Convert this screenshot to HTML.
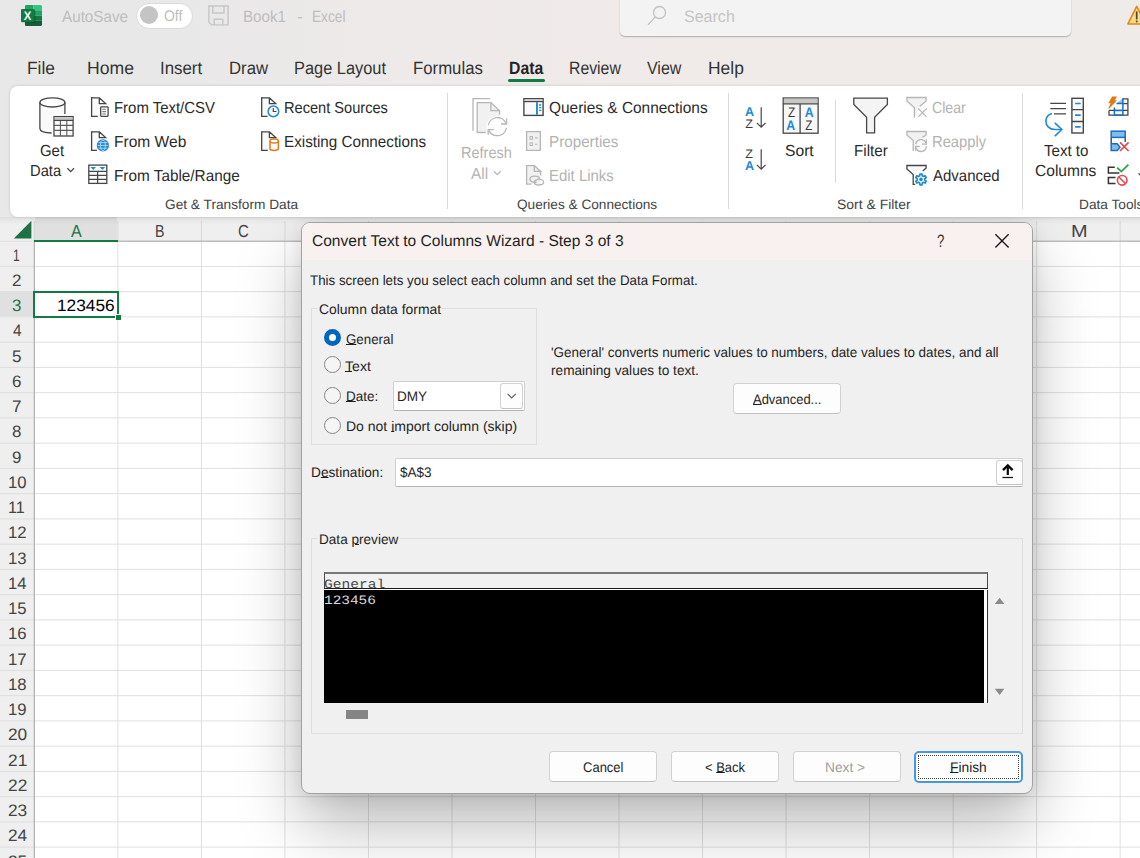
<!DOCTYPE html>
<html lang="en">
<head>
<meta charset="utf-8">
<title>Book1 - Excel</title>
<style>
*{box-sizing:border-box;margin:0;padding:0}
html,body{width:1140px;height:858px;overflow:hidden;background:#fff}
body{font-family:"Liberation Sans",sans-serif;color:#262626}
#app{position:relative;width:1140px;height:858px;overflow:hidden;background:#fff}
#app div,#app svg,#app span.t{position:absolute}
.t{white-space:nowrap;line-height:1;transform-origin:0 0;display:block;text-rendering:geometricPrecision}
.t u{text-decoration-thickness:1.2px;text-underline-offset:.4px}
/* window chrome */
#chrome{left:0;top:0;width:1140px;height:217px;background:linear-gradient(90deg,#e8e8e8 0,#e9e8e8 180px,#eeeae9 420px,#f0ebe9 700px,#efebe9 1140px)}
#search{left:620px;top:-6px;width:451px;height:42px;background:#f3f3f3;border-radius:5px;box-shadow:0 1px 1.5px rgba(0,0,0,.28)}
#toggle{left:135.5px;top:2.5px;width:57px;height:26px;border-radius:13px;background:#fff;border:1.5px solid #dadada}
#knob{left:3.5px;top:2px;width:18px;height:18px;border-radius:50%;background:#c4c4c4}
#tabline{left:508px;top:79px;width:36.7px;height:3px;border-radius:1.5px;background:#107c41}
#ribbon{left:10px;top:86px;width:1140px;height:131px;background:#fff;border-radius:8px 0 0 8px;box-shadow:0 0 3px rgba(0,0,0,.18)}
.vsep{width:1px;background:#dadada}
/* sheet */
#sheet{left:0;top:0;width:1140px;height:858px;background:#fff}
#colhdr{left:0;top:217px;width:1140px;height:24px;background:#efefef}
#rowhdr{left:0;top:241px;width:34px;height:617px;background:#efefef}
#hdrshade{left:0;top:217px;width:1140px;height:8px;background:linear-gradient(180deg,rgba(0,0,0,.07),rgba(0,0,0,.03) 40%,rgba(0,0,0,0))}
#colA{left:34.8px;top:217px;width:82.6px;height:23.7px;background:#e0e0e0}
#colAline{left:34.3px;top:239.8px;width:84.1px;height:2px;background:#107c41}
#row3{left:0;top:292.15px;width:33.8px;height:24.25px;background:#e0e0e0}
#sel{left:33.2px;top:290.7px;width:85.7px;height:27.1px;border:2px solid #107c41}
#handle{left:115.2px;top:313.6px;width:6px;height:6px;background:#107c41;border:1px solid #fff;border-width:1px 0 0 1px}
/* dialog */
#dlg{left:301px;top:222px;width:732px;height:572px;background:#f0f0f0;border:1px solid #a2a2a2;border-radius:9px;box-shadow:0 32px 64px rgba(0,0,0,.27),0 2px 18px rgba(0,0,0,.09);overflow:hidden}
#dlgtitle{left:302px;top:223px;width:730px;height:37px;background:#f9f1ef;border-radius:8px 8px 0 0}
.grp{border:1px solid #dedede}
.grplbl{background:#f0f0f0;height:14px}
.radio{width:17px;height:17px;border-radius:50%;border:1.4px solid #868686;background:#f5f5f5}
.radio.on{border:5px solid #0067c0;background:#fff}
.btn{background:#fdfdfd;border:1px solid #d2d2d2;border-bottom-color:#c2c2c2;border-radius:4px}
.inp{background:#fff;border:1px solid #cfcfcf;border-bottom-color:#b4b4b4;border-radius:2px}
#finish{border:2px solid #4597df;border-radius:5px;background:#fdfdfd}
#focus{left:2px;top:2px;width:101px;height:24px;border:1px dotted #444}

</style>
</head>
<body>
<div id="app">
<div id="sheet">
<div id="colhdr"></div><div id="rowhdr"></div><div id="colA"></div><div id="row3"></div>
<svg id="grid" width="1140" height="858" viewBox="0 0 1140 858" style="left:0;top:0">
<g fill="#e0e0e0">
<rect x="117.40" y="242" width="1" height="616"/>
<rect x="200.92" y="242" width="1" height="616"/>
<rect x="284.44" y="242" width="1" height="616"/>
<rect x="367.96" y="242" width="1" height="616"/>
<rect x="451.48" y="242" width="1" height="616"/>
<rect x="535.00" y="242" width="1" height="616"/>
<rect x="618.52" y="242" width="1" height="616"/>
<rect x="702.04" y="242" width="1" height="616"/>
<rect x="785.56" y="242" width="1" height="616"/>
<rect x="869.08" y="242" width="1" height="616"/>
<rect x="952.60" y="242" width="1" height="616"/>
<rect x="1036.12" y="242" width="1" height="616"/>
<rect x="1119.64" y="242" width="1" height="616"/>
<rect x="35" y="265.90" width="1105" height="1"/>
<rect x="35" y="291.15" width="1105" height="1"/>
<rect x="35" y="316.40" width="1105" height="1"/>
<rect x="35" y="341.65" width="1105" height="1"/>
<rect x="35" y="366.90" width="1105" height="1"/>
<rect x="35" y="392.15" width="1105" height="1"/>
<rect x="35" y="417.40" width="1105" height="1"/>
<rect x="35" y="442.65" width="1105" height="1"/>
<rect x="35" y="467.90" width="1105" height="1"/>
<rect x="35" y="493.15" width="1105" height="1"/>
<rect x="35" y="518.40" width="1105" height="1"/>
<rect x="35" y="543.65" width="1105" height="1"/>
<rect x="35" y="568.90" width="1105" height="1"/>
<rect x="35" y="594.15" width="1105" height="1"/>
<rect x="35" y="619.40" width="1105" height="1"/>
<rect x="35" y="644.65" width="1105" height="1"/>
<rect x="35" y="669.90" width="1105" height="1"/>
<rect x="35" y="695.15" width="1105" height="1"/>
<rect x="35" y="720.40" width="1105" height="1"/>
<rect x="35" y="745.65" width="1105" height="1"/>
<rect x="35" y="770.90" width="1105" height="1"/>
<rect x="35" y="796.15" width="1105" height="1"/>
<rect x="35" y="821.40" width="1105" height="1"/>
<rect x="35" y="846.65" width="1105" height="1"/>
<rect x="35" y="871.90" width="1105" height="1"/>
</g><g fill="#d9d9d9">
<rect x="117.40" y="221" width="1" height="20"/>
<rect x="200.92" y="221" width="1" height="20"/>
<rect x="284.44" y="221" width="1" height="20"/>
<rect x="367.96" y="221" width="1" height="20"/>
<rect x="451.48" y="221" width="1" height="20"/>
<rect x="535.00" y="221" width="1" height="20"/>
<rect x="618.52" y="221" width="1" height="20"/>
<rect x="702.04" y="221" width="1" height="20"/>
<rect x="785.56" y="221" width="1" height="20"/>
<rect x="869.08" y="221" width="1" height="20"/>
<rect x="952.60" y="221" width="1" height="20"/>
<rect x="1036.12" y="221" width="1" height="20"/>
<rect x="1119.64" y="221" width="1" height="20"/>
</g><g fill="#dedede">
<rect x="0" y="265.90" width="34" height="1"/>
<rect x="0" y="291.15" width="34" height="1"/>
<rect x="0" y="316.40" width="34" height="1"/>
<rect x="0" y="341.65" width="34" height="1"/>
<rect x="0" y="366.90" width="34" height="1"/>
<rect x="0" y="392.15" width="34" height="1"/>
<rect x="0" y="417.40" width="34" height="1"/>
<rect x="0" y="442.65" width="34" height="1"/>
<rect x="0" y="467.90" width="34" height="1"/>
<rect x="0" y="493.15" width="34" height="1"/>
<rect x="0" y="518.40" width="34" height="1"/>
<rect x="0" y="543.65" width="34" height="1"/>
<rect x="0" y="568.90" width="34" height="1"/>
<rect x="0" y="594.15" width="34" height="1"/>
<rect x="0" y="619.40" width="34" height="1"/>
<rect x="0" y="644.65" width="34" height="1"/>
<rect x="0" y="669.90" width="34" height="1"/>
<rect x="0" y="695.15" width="34" height="1"/>
<rect x="0" y="720.40" width="34" height="1"/>
<rect x="0" y="745.65" width="34" height="1"/>
<rect x="0" y="770.90" width="34" height="1"/>
<rect x="0" y="796.15" width="34" height="1"/>
<rect x="0" y="821.40" width="34" height="1"/>
<rect x="0" y="846.65" width="34" height="1"/>
<rect x="0" y="871.90" width="34" height="1"/>
</g>
<rect x="0" y="240.7" width="34" height="1" fill="#dedede"/>
<rect x="34" y="240.7" width="1106" height="1" fill="#a0a0a0"/>
<rect x="33.8" y="221" width="1" height="20" fill="#cfcfcf"/>
<rect x="33.8" y="241" width="1" height="617" fill="#a0a0a0"/>
<path d="M13.8 238.4 L31.4 238.4 L31.4 220.8 Z" fill="#1e7145"/>
</svg>
<div id="colAline"></div><div id="sel"></div><div id="handle"></div><div id="hdrshade"></div>
</div>
<div id="dlg"></div>
<div id="chrome">
<div id="search"></div>
<div id="toggle"><div id="knob"></div></div>
<div id="tabline"></div>
<div id="ribbon"></div>
<div class="vsep" style="left:447px;top:93px;height:116px"></div>
<div class="vsep" style="left:728px;top:93px;height:116px"></div>
<div class="vsep" style="left:835px;top:100px;height:83px"></div>
<div class="vsep" style="left:1022px;top:93px;height:116px"></div>
</div>
<div id="dlgtitle"></div>
<div id="dlgbody">
<div class="grp" style="left:311px;top:308px;width:226px;height:137px"></div>
<div class="grplbl" style="left:317px;top:302px;width:125px"></div>
<div class="radio on" style="left:324px;top:329px"></div>
<div class="radio" style="left:324px;top:356px"></div>
<div class="radio" style="left:324px;top:387px"></div>
<div class="radio" style="left:324px;top:417px"></div>
<div class="inp" style="left:393px;top:381px;width:132px;height:30px"></div>
<div class="btn" style="left:500px;top:383px;width:23px;height:26px;border-radius:3px"></div>
<div class="btn" style="left:733px;top:383px;width:108px;height:31px"></div>
<div class="inp" style="left:395px;top:458px;width:628px;height:29px"></div>
<div class="btn" style="left:996px;top:460px;width:27px;height:25px;border-radius:3px"></div>
<div class="grp" style="left:311px;top:538px;width:712px;height:196px"></div>
<div class="grplbl" style="left:317px;top:532px;width:83px"></div>
<div id="pvhead" style="left:324px;top:572px;width:664px;height:16px;background:#f1f1f1;border:1px solid #4a4a4a;border-top:2px solid #777;border-bottom:0"></div>
<div id="pvline" style="left:324px;top:588px;width:664px;height:1px;background:#1a1a1a"></div>
<div id="pvgap" style="left:325px;top:589px;width:659px;height:1px;background:#fff"></div>
<div id="pvblack" style="left:324px;top:590px;width:660px;height:113px;background:#000"></div>
<div id="pvstrip" style="left:984px;top:590px;width:4px;height:113px;background:#fff;border-right:1px solid #333"></div>
<div id="hthumb" style="left:345.6px;top:710.1px;width:22.3px;height:9.4px;background:#858585"></div>
<div class="btn" style="left:549px;top:751px;width:108px;height:31px"></div>
<div class="btn" style="left:671px;top:751px;width:108px;height:31px"></div>
<div class="btn" style="left:793px;top:751px;width:108px;height:31px"></div>
<div id="finish" style="left:914px;top:751px;width:109px;height:32px"><div id="focus"></div></div>
</div>
<svg id="icons" width="1140" height="858" viewBox="0 0 1140 858" style="left:0;top:0" fill="none" stroke-linecap="butt" stroke-linejoin="miter">
<g id="ic-excel" stroke="none">
<clipPath id="xlclip"><rect x="24.8" y="5" width="17.2" height="21" rx="1.6"/></clipPath>
<g clip-path="url(#xlclip)">
<rect x="24.8" y="5" width="8.6" height="5.3" fill="#21a366"/><rect x="33.4" y="5" width="8.6" height="5.3" fill="#33c481"/>
<rect x="24.8" y="10.3" width="8.6" height="5.3" fill="#107c41"/><rect x="33.4" y="10.3" width="8.6" height="5.3" fill="#21a366"/>
<rect x="24.8" y="15.6" width="8.6" height="5.2" fill="#185c37"/><rect x="33.4" y="15.6" width="8.6" height="5.2" fill="#107c41"/>
<rect x="24.8" y="20.8" width="17.2" height="5.2" fill="#185c37"/>
<rect x="25" y="9.6" width="10.4" height="13.4" rx="1.2" fill="#000" opacity=".28"/>
</g>
<rect x="21" y="9" width="13.4" height="13.2" rx="1.3" fill="#107c41"/>
<text x="27.6" y="20" font-family="'Liberation Sans',sans-serif" font-size="12.4" font-weight="700" fill="#fff" text-anchor="middle" textLength="7.6" lengthAdjust="spacingAndGlyphs" text-rendering="geometricPrecision">X</text>
</g>
<g id="ic-save" stroke="#c6c6c6" stroke-width="1.4">
<path d="M208.9 6H228.1V24.9H211.6L208.9 22.2Z"/><path d="M212.8 6V13H224V6"/><path d="M214.2 24.9V19.3H222.8V24.9"/>
</g>
<g id="ic-search" stroke="#c2c2c2" stroke-width="1.3" stroke-linecap="round"><circle cx="659.5" cy="12.5" r="6"/><path d="M655.2 16.9L648.4 24.4"/></g>
<g id="ic-warn"><path d="M1136.7 6.4L1146 23.9H1127.9Z" fill="#f9dc8c" stroke="#e8820f" stroke-width="1.5" stroke-linejoin="round"/><rect x="1135.85" y="11.4" width="1.7" height="8" fill="#4a4a3c" stroke="none"/><rect x="1135.85" y="20.5" width="1.7" height="1.8" fill="#4a4a3c" stroke="none"/></g>
<g id="ic-getdata" stroke="#464646" stroke-width="1.3">
<path d="M39.9 102.3V128.6C39.9 131 45 133 51.6 133.2V113.9H64.9V102.3Z" fill="#fafafa" stroke="none"/>
<ellipse cx="52.4" cy="102.4" rx="12.5" ry="4.6" fill="#fdfdfd"/>
<path d="M39.9 102.4V128.4C39.9 130.8 44.6 132.7 51.6 133"/><path d="M64.9 102.4V114"/>
<rect x="54" y="116.6" width="19.1" height="19.4" fill="#fff"/><rect x="54.6" y="117.2" width="17.9" height="2.6" fill="#c8c6c4" stroke="none"/>
<path d="M54 120.4H73.1"/><path d="M54 125.4H73.1M54 130.4H73.1M60.4 120.4V136M66.8 120.4V136" stroke-width="1.1" stroke="#5a5a5a"/>
</g>
<g id="ic-textcsv"><path d="M91.6 97.8V116.4H105.6V103.6L99.3 97.8Z" fill="#fafafa" stroke="none"/><path d="M91.6 97.8H99.3V103.6H105.6L99.3 97.8" stroke="#464646" stroke-width="1.3"/><path d="M91.6 97.1V116.4H97.8" stroke="#464646" stroke-width="1.3"/>
<rect x="100.7" y="106.8" width="7.4" height="9.6" rx=".8" fill="#fff" stroke="#464646" stroke-width="1.3"/><path d="M102.3 109.2H105.9M102.3 111.6H105.9M102.3 114H105.9" stroke="#777" stroke-width="1.1"/></g>
<g id="ic-web"><path d="M91.6 131.8V150.4H105.6V137.6L99.3 131.8Z" fill="#fafafa" stroke="none"/><path d="M91.6 131.8H99.3V137.6H105.6L99.3 131.8" stroke="#464646" stroke-width="1.3"/><path d="M91.6 131.2V150.4H96.9" stroke="#464646" stroke-width="1.3"/>
<circle cx="102.9" cy="145.4" r="6.1" fill="#1e8ad6"/>
<g stroke="#bfe0f6" stroke-width=".9" opacity=".95"><ellipse cx="102.9" cy="145.4" rx="2.4" ry="5.2"/><path d="M97.6 145.4H108.2M98.6 142.6H107.2M98.6 148.2H107.2"/></g></g>
<g id="ic-table" stroke="#464646" stroke-width="1.3"><rect x="88.8" y="165.1" width="18" height="18.3" fill="#fff"/>
<path d="M88.8 171.4H106.8M88.8 175.4H106.8M88.8 179.4H106.8M97.6 171.4V183.4"/>
<path d="M90.4 167.1H96L93.2 169.9ZM99.6 167.1H105.2L102.4 169.9Z" fill="#1e8ad6" stroke="none"/></g>
<g id="ic-recent"><path d="M261.7 97.8V116.4H275.7V103.6L269.4 97.8Z" fill="#fafafa" stroke="none"/><path d="M261.7 97.8H269.4V103.6H275.7L269.4 97.8" stroke="#464646" stroke-width="1.3"/><path d="M261.7 97.1V116.4H267.6" stroke="#464646" stroke-width="1.3"/>
<circle cx="273.4" cy="111.4" r="5.3" fill="#fff" stroke="#1e8ad6" stroke-width="1.5"/><path d="M273.3 108V111.5H276.4" stroke="#464646" stroke-width="1.2"/></g>
<g id="ic-existing"><path d="M261.7 131.8V150.4H275.7V137.6L269.4 131.8Z" fill="#fafafa" stroke="none"/><path d="M261.7 131.8H269.4V137.6H275.7L269.4 131.8" stroke="#464646" stroke-width="1.3"/><path d="M261.7 131.2V150.4H267.8" stroke="#464646" stroke-width="1.3"/>
<g stroke="#e07a18" stroke-width="1.5"><path d="M270 140.9V148.6C270 149.8 271.9 150.5 274.2 150.5S278.4 149.8 278.4 148.6V140.9" fill="#fafafa"/><ellipse cx="274.2" cy="140.9" rx="4.2" ry="2" fill="#fff"/></g></g>
<g id="ic-refresh" stroke="#b6b6b6" stroke-width="1.3">
<path d="M473 130.8V98.6H490.2"/>
<path d="M477.2 102.6H490.9L499.6 110.9V133.1H477.2Z" fill="#f1f1f1" stroke="none"/>
<path d="M485.6 132.5H477.2V102.6H490.9L499.6 110.9V114.6"/><path d="M490.9 102.6V110.7H499.6"/>
<circle cx="497.3" cy="126.7" r="10.8" fill="#fff" stroke="none"/>
<path d="M488.3 125.4A9.2 9.2 0 0 1 505.9 123.2"/><path d="M506.6 118.5V124H501"/>
<path d="M506.3 128A9.2 9.2 0 0 1 488.9 130.4"/><path d="M488.2 134.8V129.6H493.8"/>
</g>
<g id="ic-qc"><rect x="523.9" y="98.7" width="19.2" height="16.7" fill="#fafafa" stroke="#464646" stroke-width="1.4"/>
<rect x="524.6" y="99.4" width="17.8" height="1.7" fill="#d2d2d2"/><path d="M523.9 101.6H543.1" stroke="#464646" stroke-width="1.2"/>
<rect x="536" y="102.2" width="1.9" height="12.6" fill="#1e8ad6"/><path d="M539 105H541.2M539 107.6H541.2M539 110.3H541.2" stroke="#1e8ad6" stroke-width="1.3"/></g>
<g id="ic-props" stroke="#b6b6b6"><rect x="526.6" y="131.6" width="13.7" height="18.8" fill="#f1f1f1" stroke-width="1.3"/>
<rect x="530" y="136.6" width="2.6" height="2.6" stroke-width="1"/><rect x="530" y="142.9" width="2.6" height="2.6" stroke-width="1"/><path d="M535 137.9H537.5M535 144.2H537.5" stroke-width="1.1"/></g>
<g id="ic-links"><path d="M526.6 165.6V184.2H540.6V171.4L534.3 165.6Z" fill="#f1f1f1" stroke="none"/><path d="M526.6 165.6H534.3V171.4H540.6L534.3 165.6" stroke="#b6b6b6" stroke-width="1.3"/><path d="M526.6 164.9V184.2H531.3" stroke="#b6b6b6" stroke-width="1.3"/><path d="M540.6 170.8V175.4" stroke="#b6b6b6" stroke-width="1.3"/>
<g stroke="#b6b6b6" stroke-width="1.3"><path d="M536.6 182.2C532.6 182.6 529.9 181.2 529.9 179.2C529.9 177.3 532 176.2 534.8 176.2C537.6 176.2 539.4 177.4 539.4 178.7" fill="none"/><path d="M537 179.3C540.6 178.8 543.6 180 543.6 182.1C543.6 184 541.6 185 539 185C536.2 185 534.4 183.8 534.4 182.4C534.4 181 535.6 180.2 537.2 180"/></g></g>
<g id="ic-sorts" font-family="'Liberation Sans',sans-serif" stroke="none" text-rendering="geometricPrecision">
<text x="745.1" y="116.0" font-size="12.8" font-weight="700" fill="#1e8ad6" textLength="9.1" lengthAdjust="spacingAndGlyphs">A</text>
<text x="745.3" y="128.0" font-size="12.2" font-weight="400" fill="#3a3a3a" textLength="7.7" lengthAdjust="spacingAndGlyphs">Z</text>
<text x="745.3" y="158.0" font-size="12.2" font-weight="400" fill="#3a3a3a" textLength="7.7" lengthAdjust="spacingAndGlyphs">Z</text>
<text x="745.1" y="170.0" font-size="12.8" font-weight="700" fill="#1e8ad6" textLength="9.1" lengthAdjust="spacingAndGlyphs">A</text>
<g stroke="#464646" stroke-width="1.2" fill="none"><path d="M761.2 107.2V127M756.9 122.9L761.2 127.2L765.5 122.9"/><path d="M761.2 149.2V169M756.9 164.9L761.2 169.2L765.5 164.9"/></g>
<rect x="783.2" y="98" width="34.9" height="35.2" fill="#f8f8f8" stroke="#464646" stroke-width="1.3"/><rect x="783.9" y="98.7" width="33.5" height="4.6" fill="#c8c6c4"/>
<path d="M783.2 103.8H818.1M800.1 103.8V133.2" stroke="#464646" stroke-width="1.3" fill="none"/>
<text x="787.9" y="116.5" font-size="13.8" font-weight="400" fill="#3a3a3a" textLength="7.2" lengthAdjust="spacingAndGlyphs">Z</text>
<text x="786.3" y="129.8" font-size="13.8" font-weight="700" fill="#1e8ad6" textLength="8.9" lengthAdjust="spacingAndGlyphs">A</text>
<text x="804.7" y="116.5" font-size="13.8" font-weight="700" fill="#1e8ad6" textLength="8.9" lengthAdjust="spacingAndGlyphs">A</text>
<text x="805.2" y="129.8" font-size="13.8" font-weight="400" fill="#3a3a3a" textLength="7.1" lengthAdjust="spacingAndGlyphs">Z</text>
</g>
<g id="ic-filter"><path d="M853.8 98.2H887.4V104.4L874.6 117.2V132.8H866.6V117.2L853.8 104.4Z" fill="#f4f4f4" stroke="#464646" stroke-width="1.3"/></g>
<g id="ic-clear" stroke="#b6b6b6" stroke-width="1.3"><path d="M914.4 117.4V107.7L906.9 101V97.5H926.1V101L919.7 106.5" fill="#f2f2f2"/><path d="M918.2 108.5L926.6 116.9M926.6 108.5L918.2 116.9" stroke-width="1.1"/></g>
<g id="ic-reapply" stroke="#b6b6b6" stroke-width="1.3"><path d="M913.2 151V140.6L906.9 135V131.5H926.1V135L922.4 137.4" fill="#f2f2f2"/>
<path d="M915.9 144.2A5.2 5.2 0 0 1 925.9 143"/><path d="M926.4 139.6V144.2H922"/><path d="M926.3 146.2A5.2 5.2 0 0 1 916.2 148"/><path d="M915.6 150.8V146.5H919.8"/></g>
<g id="ic-adv"><path d="M915.2 184.4H913.2V174.5L906.9 169V165.5H926.1V168L922.8 170.9" fill="#fafafa" stroke="#464646" stroke-width="1.3"/>
<circle cx="921" cy="179.4" r="6.4" fill="#fff" stroke="none"/>
<path d="M919.73 175.82L919.91 174.01L922.09 174.01L922.27 175.82L923.47 176.51L925.12 175.76L926.21 177.65L924.74 178.71L924.74 180.09L926.21 181.15L925.12 183.04L923.47 182.29L922.27 182.98L922.09 184.79L919.91 184.79L919.73 182.98L918.53 182.29L916.88 183.04L915.79 181.15L917.26 180.09L917.26 178.71L915.79 177.65L916.88 175.76L918.53 176.51Z" fill="#fff" stroke="#1e8ad6" stroke-width="1.7" stroke-linejoin="round"/>
<circle cx="921" cy="179.4" r="1.8" fill="#1e8ad6" stroke="none"/></g>
<g id="ic-t2c"><path d="M1050.3 103.4H1066M1050.3 108.6H1066M1054 113.8H1066" stroke="#464646" stroke-width="1.3"/>
<rect x="1071.9" y="98.3" width="11.4" height="34.7" fill="#fafafa" stroke="#464646" stroke-width="1.4"/><path d="M1071.9 109.6H1083.3M1071.9 121.5H1083.3" stroke="#464646" stroke-width="1.4"/>
<path d="M1075.1 103.5H1080.7M1075.1 115.1H1080.7M1075.1 126.9H1080.7" stroke="#1e8ad6" stroke-width="1.7"/>
<path d="M1052 113.6C1048.2 114.6 1045.9 117.6 1045.9 121.2C1045.9 126 1049.6 129.5 1054.6 129.5H1061.6" stroke="#1e8ad6" stroke-width="1.6"/><path d="M1054.8 122.9L1061.8 129.5L1054.8 136.2" stroke="#1e8ad6" stroke-width="1.6"/></g>
<g id="ic-flash"><path d="M1122.9 98.9H1127.9V115.2H1109V110.4" stroke="#464646" stroke-width="1.3"/><path d="M1109 110.4H1127.9M1122.9 103.6H1127.9" stroke="#464646" stroke-width="1.3"/>
<path d="M1122.9 98.3L1116.4 103.6H1122.9Z" fill="#8cc4ee" stroke="none"/>
<path d="M1114.4 107.4V115.2H1122.9V98.3M1116.6 103.6H1122.9M1114.4 110.4H1122.9" stroke="#1a6fc4" stroke-width="1.5"/>
<path d="M1112.2 96.4H1117L1114.8 100.2H1117L1109.4 108.4H1108.2L1110.8 103.2H1108.2Z" fill="#e07a10" stroke="none"/></g>
<g id="ic-dups"><rect x="1111.2" y="131.2" width="14" height="6.2" fill="#83bdec" stroke="#1a6fc4" stroke-width="1.5"/>
<path d="M1111.2 138V143.4M1125.2 138V142" stroke="#464646" stroke-width="1.4"/>
<path d="M1111.2 143.8H1117.2L1120 147.2L1117.2 150.4H1111.2Z" fill="#83bdec" stroke="#1a6fc4" stroke-width="1.5"/>
<path d="M1120 142.4L1128.6 151M1128.6 142.4L1120 151" stroke="#e8474c" stroke-width="1.7"/></g>
<g id="ic-valid"><path d="M1114.8 167.3H1108.4V173.1H1119.4M1115.5 177.6H1108.4V183.6H1115.5" stroke="#333" stroke-width="1.5"/>
<path d="M1117.2 167.6L1121.3 171.6L1128.4 164.7" stroke="#2ea050" stroke-width="1.8"/>
<circle cx="1122.2" cy="180.3" r="4.8" fill="#fff" stroke="#e8474c" stroke-width="1.6"/><path d="M1118.9 177L1125.5 183.6" stroke="#e8474c" stroke-width="1.5"/>
<path d="M1138.6 173.4L1141.8 176.6" stroke="#464646" stroke-width="1.3"/></g>
<g id="ic-chev" stroke-width="1.3"><path d="M67.4 168.3L70.7 171.6L74 168.3" stroke="#464646"/><path d="M493.9 171.2L497.3 174.6L500.7 171.2" stroke="#b6b6b6"/></g>
<g id="ic-dlg"><path d="M995.4 234.2L1008.6 247.4M1008.6 234.2L995.4 247.4" stroke="#1b1b1b" stroke-width="1.35"/>
<path d="M507.6 393.8L511.7 397.9L515.8 393.8" stroke="#5a5a5a" stroke-width="1.1"/>
<path d="M1007.8 466V475" stroke="#0a0a0a" stroke-width="2.2"/><path d="M1003 470.2L1007.8 465.4L1012.6 470.2" stroke="#0a0a0a" stroke-width="2.4" stroke-linejoin="miter"/><path d="M1002.4 477.5H1013" stroke="#1a1a1a" stroke-width="1.3"/>
<path d="M994.8 604L999.6 597.8L1004.4 604Z" fill="#8a8a8a" stroke="none"/><path d="M994.8 688.8L999.6 695L1004.4 688.8Z" fill="#8a8a8a" stroke="none"/></g>
</svg>
<div id="labels">
<span class="t" style="left:62.04px;top:9px;font-size:16.3px;color:#bdbdbd;transform:scaleX(0.9356)">AutoSave</span>
<span class="t" style="left:164.32px;top:9px;font-size:15.4px;color:#bdbdbd;transform:scaleX(0.9084)">Off</span>
<span class="t" style="left:243.48px;top:9px;font-size:16.3px;color:#bdbdbd;transform:scaleX(0.9308)">Book1</span>
<span class="t" style="left:296.73px;top:9px;font-size:16.3px;color:#bdbdbd;transform:scaleX(1.0422)">-</span>
<span class="t" style="left:311.57px;top:9px;font-size:16.3px;color:#bdbdbd;transform:scaleX(0.8401)">Excel</span>
<span class="t" style="left:683.55px;top:9px;font-size:16.6px;color:#c4c4c4;transform:scaleX(0.9662)">Search</span>
<span class="t" style="left:27.03px;top:60px;font-size:17.8px;color:#333333;transform:scaleX(0.9748)">File</span>
<span class="t" style="left:87.42px;top:60px;font-size:17.8px;color:#333333;transform:scaleX(0.9907)">Home</span>
<span class="t" style="left:159.83px;top:60px;font-size:17.8px;color:#333333;transform:scaleX(0.9483)">Insert</span>
<span class="t" style="left:228.87px;top:60px;font-size:17.8px;color:#333333;transform:scaleX(0.9411)">Draw</span>
<span class="t" style="left:293.79px;top:60px;font-size:17.8px;color:#333333;transform:scaleX(0.9215)">Page Layout</span>
<span class="t" style="left:413.07px;top:60px;font-size:17.8px;color:#333333;transform:scaleX(0.9423)">Formulas</span>
<span class="t" style="left:568.62px;top:60px;font-size:17.8px;color:#333333;transform:scaleX(0.8890)">Review</span>
<span class="t" style="left:647.41px;top:60px;font-size:17.8px;color:#333333;transform:scaleX(0.8991)">View</span>
<span class="t" style="left:707.83px;top:60px;font-size:17.8px;color:#333333;transform:scaleX(0.9795)">Help</span>
<span class="t" style="left:508.75px;top:60px;font-size:17.8px;color:#242424;font-weight:700;transform:scaleX(0.8870)">Data</span>
<span class="t" style="left:40.26px;top:144px;font-size:16px;color:#2b2b2b;transform:scaleX(0.9315)">Get</span>
<span class="t" style="left:29.59px;top:164px;font-size:16px;color:#2b2b2b;transform:scaleX(0.9206)">Data</span>
<span class="t" style="left:113.58px;top:101px;font-size:16px;color:#2b2b2b;transform:scaleX(0.9332)">From Text/CSV</span>
<span class="t" style="left:113.54px;top:135px;font-size:16px;color:#2b2b2b;transform:scaleX(0.9717)">From Web</span>
<span class="t" style="left:113.56px;top:169px;font-size:16px;color:#2b2b2b;transform:scaleX(0.9574)">From Table/Range</span>
<span class="t" style="left:284.10px;top:101px;font-size:16px;color:#2b2b2b;transform:scaleX(0.9128)">Recent Sources</span>
<span class="t" style="left:284.06px;top:135px;font-size:16px;color:#2b2b2b;transform:scaleX(0.9505)">Existing Connections</span>
<span class="t" style="left:164.78px;top:198px;font-size:13.6px;color:#444;transform:scaleX(1.0069)">Get &amp; Transform Data</span>
<span class="t" style="left:461.11px;top:146px;font-size:16px;color:#b3b3b3;transform:scaleX(0.9085)">Refresh</span>
<span class="t" style="left:471.04px;top:167px;font-size:16px;color:#b3b3b3;transform:scaleX(0.9587)">All</span>
<span class="t" style="left:548.76px;top:101px;font-size:16px;color:#2b2b2b;transform:scaleX(0.9642)">Queries &amp; Connections</span>
<span class="t" style="left:548.56px;top:135px;font-size:16px;color:#b3b3b3;transform:scaleX(0.9511)">Properties</span>
<span class="t" style="left:548.58px;top:169px;font-size:16px;color:#b3b3b3;transform:scaleX(0.9332)">Edit Links</span>
<span class="t" style="left:517.32px;top:198px;font-size:13.6px;color:#444;transform:scaleX(1.0025)">Queries &amp; Connections</span>
<span class="t" style="left:785.16px;top:144px;font-size:16px;color:#2b2b2b;transform:scaleX(0.9779)">Sort</span>
<span class="t" style="left:854.07px;top:144px;font-size:16px;color:#2b2b2b;transform:scaleX(0.9473)">Filter</span>
<span class="t" style="left:931.80px;top:101px;font-size:16px;color:#b3b3b3;transform:scaleX(0.8829)">Clear</span>
<span class="t" style="left:931.59px;top:135px;font-size:16px;color:#b3b3b3;transform:scaleX(0.9220)">Reapply</span>
<span class="t" style="left:933.04px;top:169px;font-size:16px;color:#2b2b2b;transform:scaleX(0.9362)">Advanced</span>
<span class="t" style="left:837.12px;top:198px;font-size:13.6px;color:#444;transform:scaleX(1.0260)">Sort &amp; Filter</span>
<span class="t" style="left:1043.71px;top:144px;font-size:16px;color:#2b2b2b;transform:scaleX(0.9422)">Text to</span>
<span class="t" style="left:1034.73px;top:164px;font-size:16px;color:#2b2b2b;transform:scaleX(0.9721)">Columns</span>
<span class="t" style="left:1079.06px;top:198px;font-size:13.6px;color:#444;transform:scaleX(1.0067)">Data Tools</span>
<span class="t" style="left:70.54px;top:223px;font-size:17.4px;color:#1e7145;transform:scaleX(0.9214)">A</span>
<span class="t" style="left:155.19px;top:223px;font-size:17.4px;color:#444444;transform:scaleX(0.8171)">B</span>
<span class="t" style="left:237.87px;top:223px;font-size:17.4px;color:#444444;transform:scaleX(0.8589)">C</span>
<span class="t" style="left:1070.86px;top:223px;font-size:17.4px;color:#444444;transform:scaleX(1.1453)">M</span>
<span class="t" style="left:12.90px;top:248px;font-size:16.6px;color:#444444;transform:scaleX(0.7211)">1</span>
<span class="t" style="left:11.99px;top:273px;font-size:16.6px;color:#444444;transform:scaleX(1.0224)">2</span>
<span class="t" style="left:12.02px;top:298px;font-size:16.6px;color:#1e7145;transform:scaleX(1.0195)">3</span>
<span class="t" style="left:12.81px;top:323px;font-size:16.6px;color:#444444;transform:scaleX(0.9293)">4</span>
<span class="t" style="left:11.91px;top:349px;font-size:16.6px;color:#444444;transform:scaleX(1.0313)">5</span>
<span class="t" style="left:11.97px;top:374px;font-size:16.6px;color:#444444;transform:scaleX(1.0244)">6</span>
<span class="t" style="left:11.92px;top:399px;font-size:16.6px;color:#444444;transform:scaleX(1.0303)">7</span>
<span class="t" style="left:12.02px;top:424px;font-size:16.6px;color:#444444;transform:scaleX(1.0190)">8</span>
<span class="t" style="left:12.02px;top:450px;font-size:16.6px;color:#444444;transform:scaleX(1.0195)">9</span>
<span class="t" style="left:8.23px;top:475px;font-size:16.6px;color:#444444;transform:scaleX(1.0053)">10</span>
<span class="t" style="left:8.26px;top:500px;font-size:16.6px;color:#444444;transform:scaleX(0.9724)">11</span>
<span class="t" style="left:8.23px;top:525px;font-size:16.6px;color:#444444;transform:scaleX(1.0080)">12</span>
<span class="t" style="left:8.23px;top:551px;font-size:16.6px;color:#444444;transform:scaleX(1.0064)">13</span>
<span class="t" style="left:8.23px;top:576px;font-size:16.6px;color:#444444;transform:scaleX(1.0021)">14</span>
<span class="t" style="left:8.23px;top:601px;font-size:16.6px;color:#444444;transform:scaleX(1.0057)">15</span>
<span class="t" style="left:8.23px;top:626px;font-size:16.6px;color:#444444;transform:scaleX(1.0064)">16</span>
<span class="t" style="left:8.23px;top:652px;font-size:16.6px;color:#444444;transform:scaleX(1.0080)">17</span>
<span class="t" style="left:8.23px;top:677px;font-size:16.6px;color:#444444;transform:scaleX(1.0064)">18</span>
<span class="t" style="left:8.23px;top:702px;font-size:16.6px;color:#444444;transform:scaleX(1.0073)">19</span>
<span class="t" style="left:7.57px;top:727px;font-size:16.6px;color:#444444;transform:scaleX(1.0415)">20</span>
<span class="t" style="left:7.57px;top:753px;font-size:16.6px;color:#444444;transform:scaleX(1.0437)">21</span>
<span class="t" style="left:7.57px;top:778px;font-size:16.6px;color:#444444;transform:scaleX(1.0444)">22</span>
<span class="t" style="left:7.57px;top:803px;font-size:16.6px;color:#444444;transform:scaleX(1.0427)">23</span>
<span class="t" style="left:7.58px;top:828px;font-size:16.6px;color:#444444;transform:scaleX(1.0382)">24</span>
<span class="t" style="left:7.57px;top:854px;font-size:16.6px;color:#444444;transform:scaleX(1.0420)">25</span>
<span class="t" style="left:57.18px;top:298px;font-size:16.4px;color:#000;transform:scaleX(1.0536)">123456</span>
<span class="t" style="left:311.82px;top:234px;font-size:15.7px;color:#1f1f1f;transform:scaleX(0.9908)">Convert Text to Columns Wizard - Step 3 of 3</span>
<span class="t" style="left:937.21px;top:232px;font-size:18px;color:#333;transform:scaleX(0.7289)">?</span>
<span class="t" style="left:309.94px;top:274px;font-size:13.9px;color:#1f1f1f;transform:scaleX(0.9604)">This screen lets you select each column and set the Data Format.</span>
<span class="t" style="left:318.87px;top:303px;font-size:13.9px;color:#1f1f1f;transform:scaleX(1.0006)">Column data format</span>
<span class="t" style="left:346.00px;top:333px;font-size:13.9px;color:#1f1f1f;transform:scaleX(0.9591)"><u>G</u>eneral</span>
<span class="t" style="left:344.90px;top:360px;font-size:13.9px;color:#1f1f1f;transform:scaleX(1.0153)"><u>T</u>ext</span>
<span class="t" style="left:346.10px;top:390px;font-size:13.9px;color:#1f1f1f;transform:scaleX(0.9689)"><u>D</u>ate:</span>
<span class="t" style="left:397.49px;top:390px;font-size:13.9px;color:#1f1f1f;transform:scaleX(0.9776)">DMY</span>
<span class="t" style="left:346.06px;top:420px;font-size:13.9px;color:#1f1f1f;transform:scaleX(1.0076)">Do not <u>i</u>mport column (skip)</span>
<span class="t" style="left:550.78px;top:346px;font-size:13.9px;color:#1f1f1f;transform:scaleX(0.9680)">'General' converts numeric values to numbers, date values to dates, and all</span>
<span class="t" style="left:550.66px;top:364px;font-size:13.9px;color:#1f1f1f;transform:scaleX(0.9823)">remaining values to text.</span>
<span class="t" style="left:752.64px;top:393px;font-size:13.9px;color:#1f1f1f;transform:scaleX(0.9327)"><u>A</u>dvanced...</span>
<span class="t" style="left:310.58px;top:466px;font-size:13.9px;color:#1f1f1f;transform:scaleX(0.9844)">D<u>e</u>stination:</span>
<span class="t" style="left:400.01px;top:466px;font-size:13.9px;color:#1f1f1f;transform:scaleX(0.9755)">$A$3</span>
<span class="t" style="left:319.09px;top:533px;font-size:13.9px;color:#1f1f1f;transform:scaleX(0.9779)">Data <u>p</u>review</span>
<span class="t" style="left:323.88px;top:579px;font-size:12.8px;color:#484848;font-family:'Liberation Mono',monospace;transform:scaleX(1.1386)">General</span>
<span class="t" style="left:324.04px;top:595px;font-size:12.8px;color:#dadada;font-family:'Liberation Mono',monospace;transform:scaleX(1.1253)">123456</span>
<span class="t" style="left:582.71px;top:761px;font-size:13.9px;color:#1f1f1f;transform:scaleX(0.9367)">Cancel</span>
<span class="t" style="left:704.85px;top:761px;font-size:13.9px;color:#1f1f1f;transform:scaleX(0.9331)">&lt; <u>B</u>ack</span>
<span class="t" style="left:825.38px;top:761px;font-size:13.9px;color:#9d9d9d;transform:scaleX(0.9870)">Next &gt;</span>
<span class="t" style="left:949.57px;top:761px;font-size:13.9px;color:#1f1f1f;transform:scaleX(0.9920)"><u>F</u>inish</span>
</div>
</div>
</body>
</html>
